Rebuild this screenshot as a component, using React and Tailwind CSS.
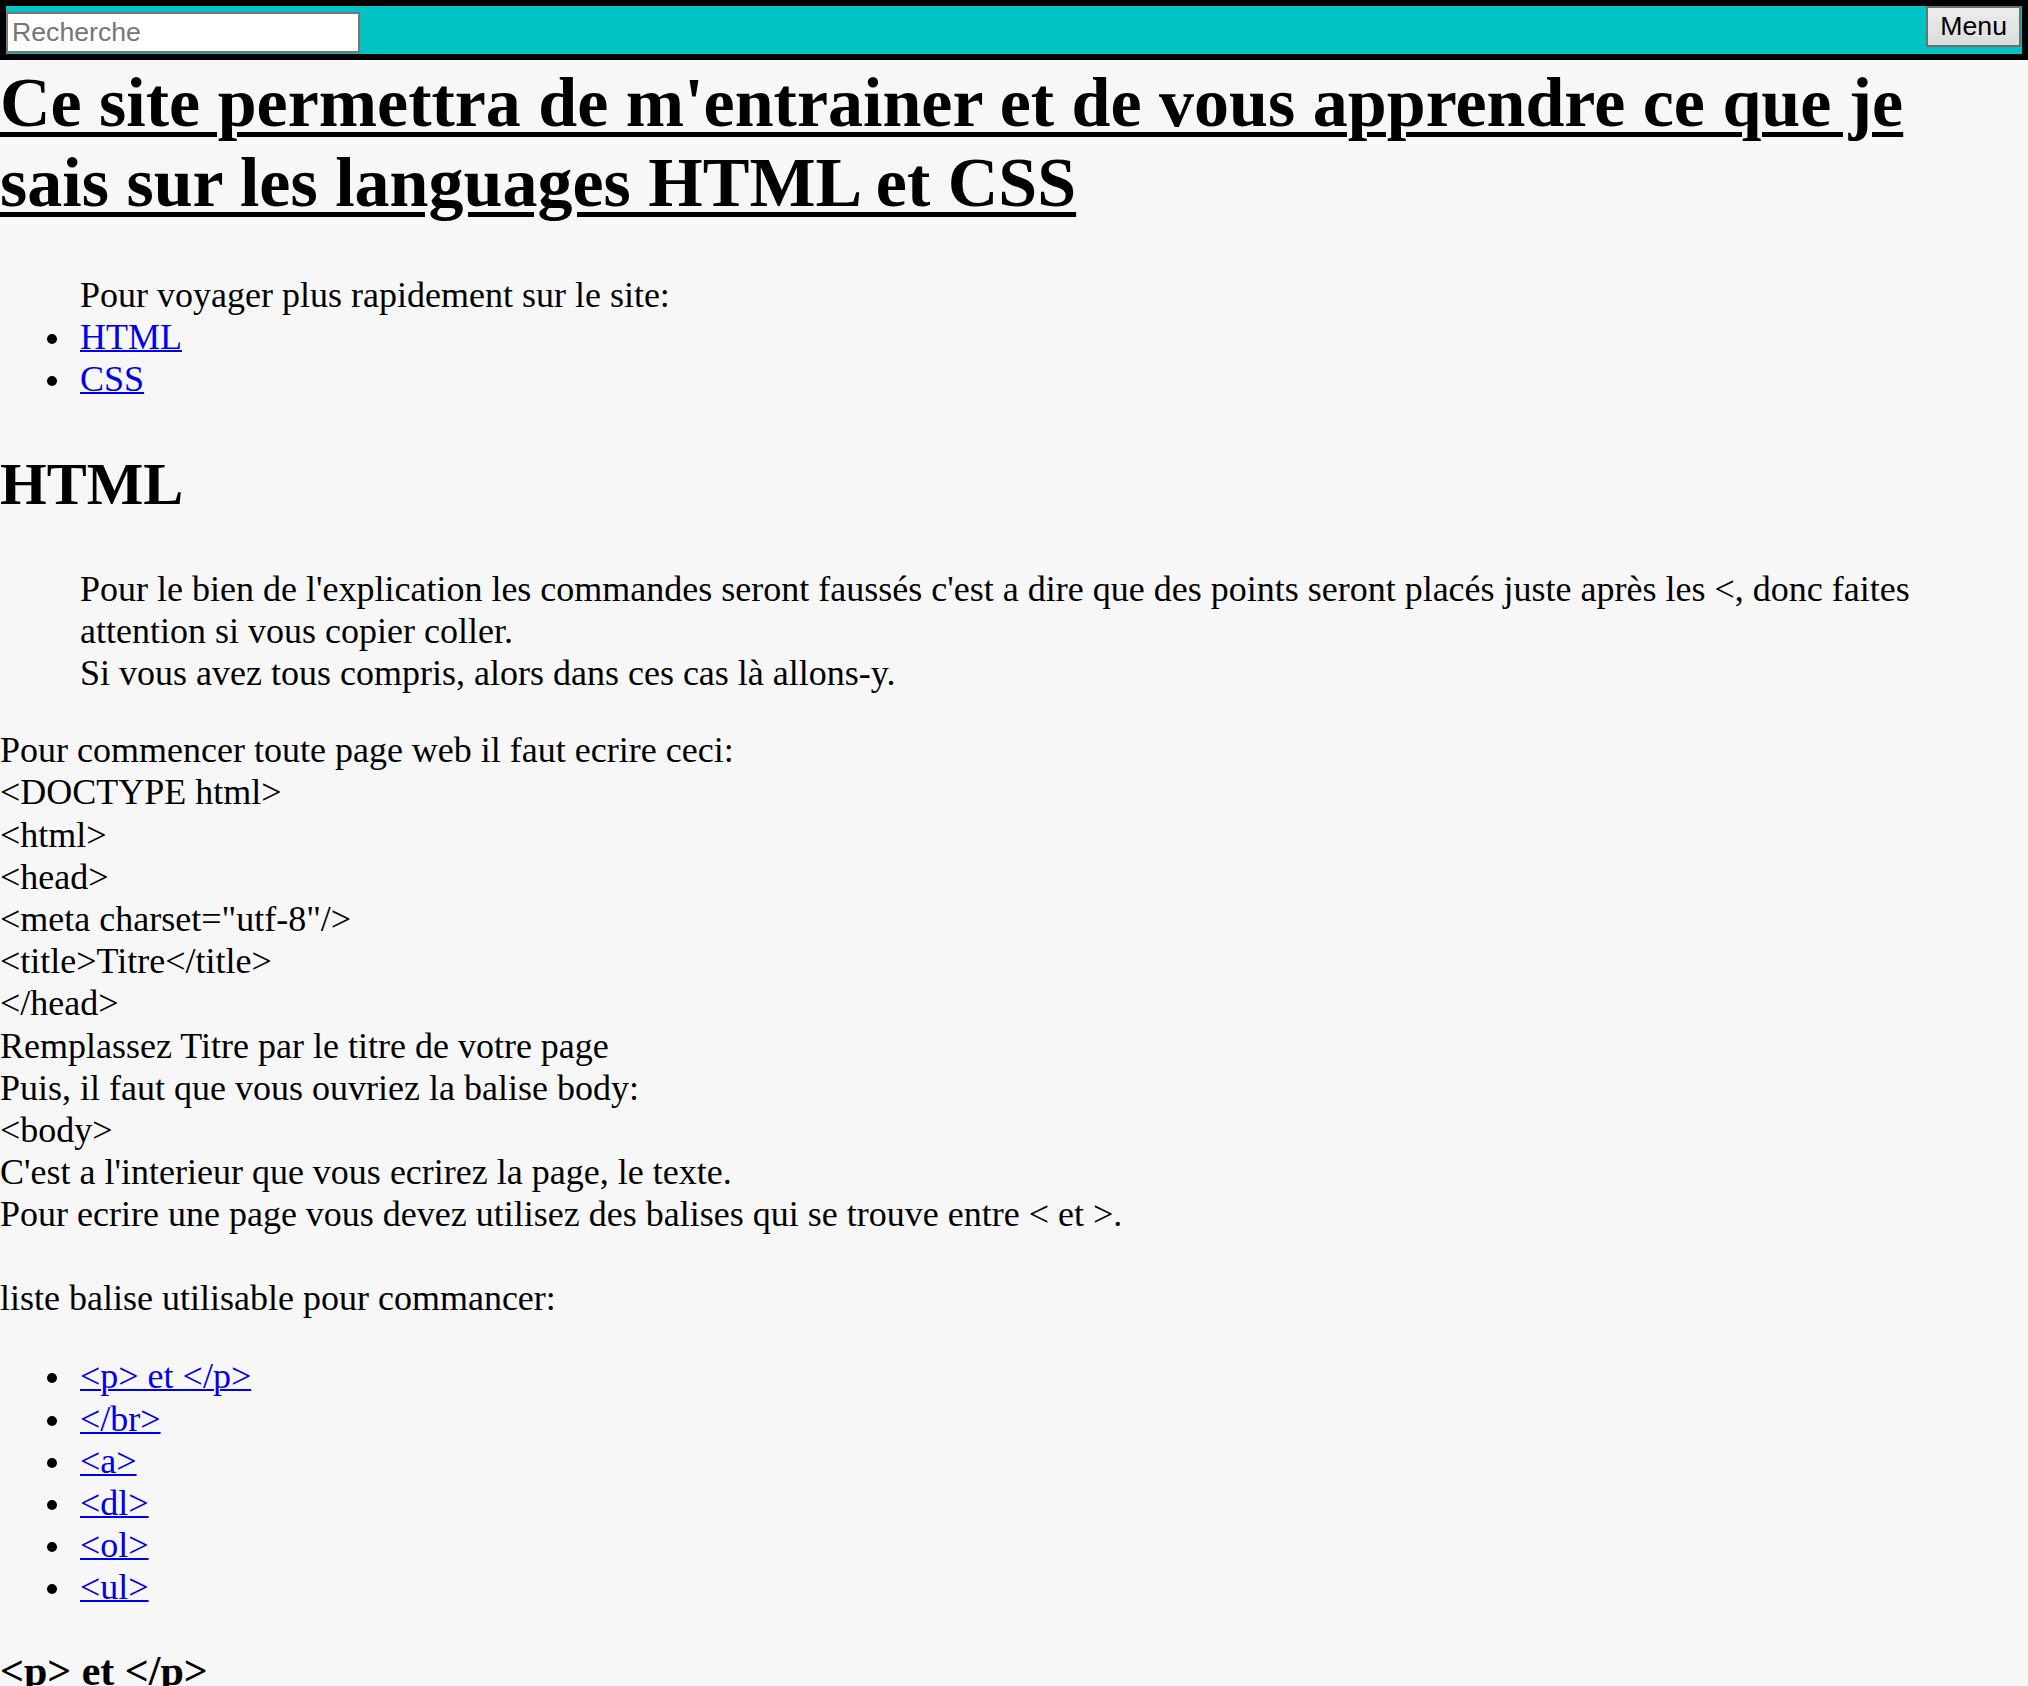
const codeLines = [
  "Pour commencer toute page web il faut ecrire ceci:",
  "<DOCTYPE html>",
  "<html>",
  "<head>",
  '<meta charset="utf-8"/>',
  "<title>Titre</title>",
  "</head>",
  "Remplassez Titre par le titre de votre page",
  "Puis, il faut que vous ouvriez la balise body:",
  "<body>",
  "C'est a l'interieur que vous ecrirez la page, le texte.",
  "Pour ecrire une page vous devez utilisez des balises qui se trouve entre < et >.",
];

const balises = ["<p> et </p>", "</br>", "<a>", "<dl>", "<ol>", "<ul>"];

function TopBar() {
  return (
    <div className="border-[6px] border-black bg-[#00c3c3] h-[60px] flex items-start justify-between">
      <input
        type="text"
        placeholder="Recherche"
        className="mt-[6px] w-[354px] h-[41px] border-2 border-[#767676] bg-white px-[4px] text-[26.67px] font-['Liberation_Sans',Arial,sans-serif] text-black placeholder:text-[#757575] outline-none"
      />
      <button className="mr-[1px] h-[41px] px-[12px] border-2 border-[#707070] bg-gradient-to-b from-[#ececec] to-[#dcdcdc] text-[26.67px] leading-none font-['Liberation_Sans',Arial,sans-serif] text-black">
        Menu
      </button>
    </div>
  );
}

function Item({ href, children }) {
  return (
    <li className="relative">
      <span className="absolute left-[-33px] top-[18px] w-[10px] h-[10px] rounded-full bg-black" />
      <a href={href} className="text-[#0000ee] underline decoration-[2px]">{children}</a>
    </li>
  );
}

export default function App() {
  return (
    <div className="min-h-screen bg-[#f7f7f7] text-black font-['Liberation_Serif','Times_New_Roman',serif] text-[36px] leading-[42.2px]">
      <TopBar />

      <h1 className="mt-[3px] text-[70px] leading-[80px] font-bold underline decoration-[5px] underline-offset-[6px]">
        Ce site permettra de m'entrainer et de vous apprendre ce que je sais sur les languages HTML et CSS
      </h1>

      <div className="mt-[51px] pl-[80px]">
        <p>Pour voyager plus rapidement sur le site:</p>
        <ul>
          <Item href="#html">HTML</Item>
          <Item href="#css">CSS</Item>
        </ul>
      </div>

      <h2 id="html" className="mt-[49px] text-[60px] leading-[69px] font-bold">HTML</h2>

      <blockquote className="mt-[49px] mx-[80px]">
        Pour le bien de l'explication les commandes seront faussés c'est a dire que des points seront placés juste après les &lt;, donc faites attention si vous copier coller.
        <br />
        Si vous avez tous compris, alors dans ces cas là allons-y.
      </blockquote>

      <div className="mt-[35px]">
        {codeLines.map((l, i) => (
          <div key={i}>{l}</div>
        ))}
      </div>

      <p className="mt-[41px]">liste balise utilisable pour commancer:</p>

      <ul className="mt-[36.5px] pl-[80px]">
        {balises.map((b) => (
          <Item key={b} href={"#" + b}>{b}</Item>
        ))}
      </ul>

      <h3 className="mt-[38px] text-[42px] leading-[48px] font-bold">&lt;p&gt; et &lt;/p&gt;</h3>
    </div>
  );
}
